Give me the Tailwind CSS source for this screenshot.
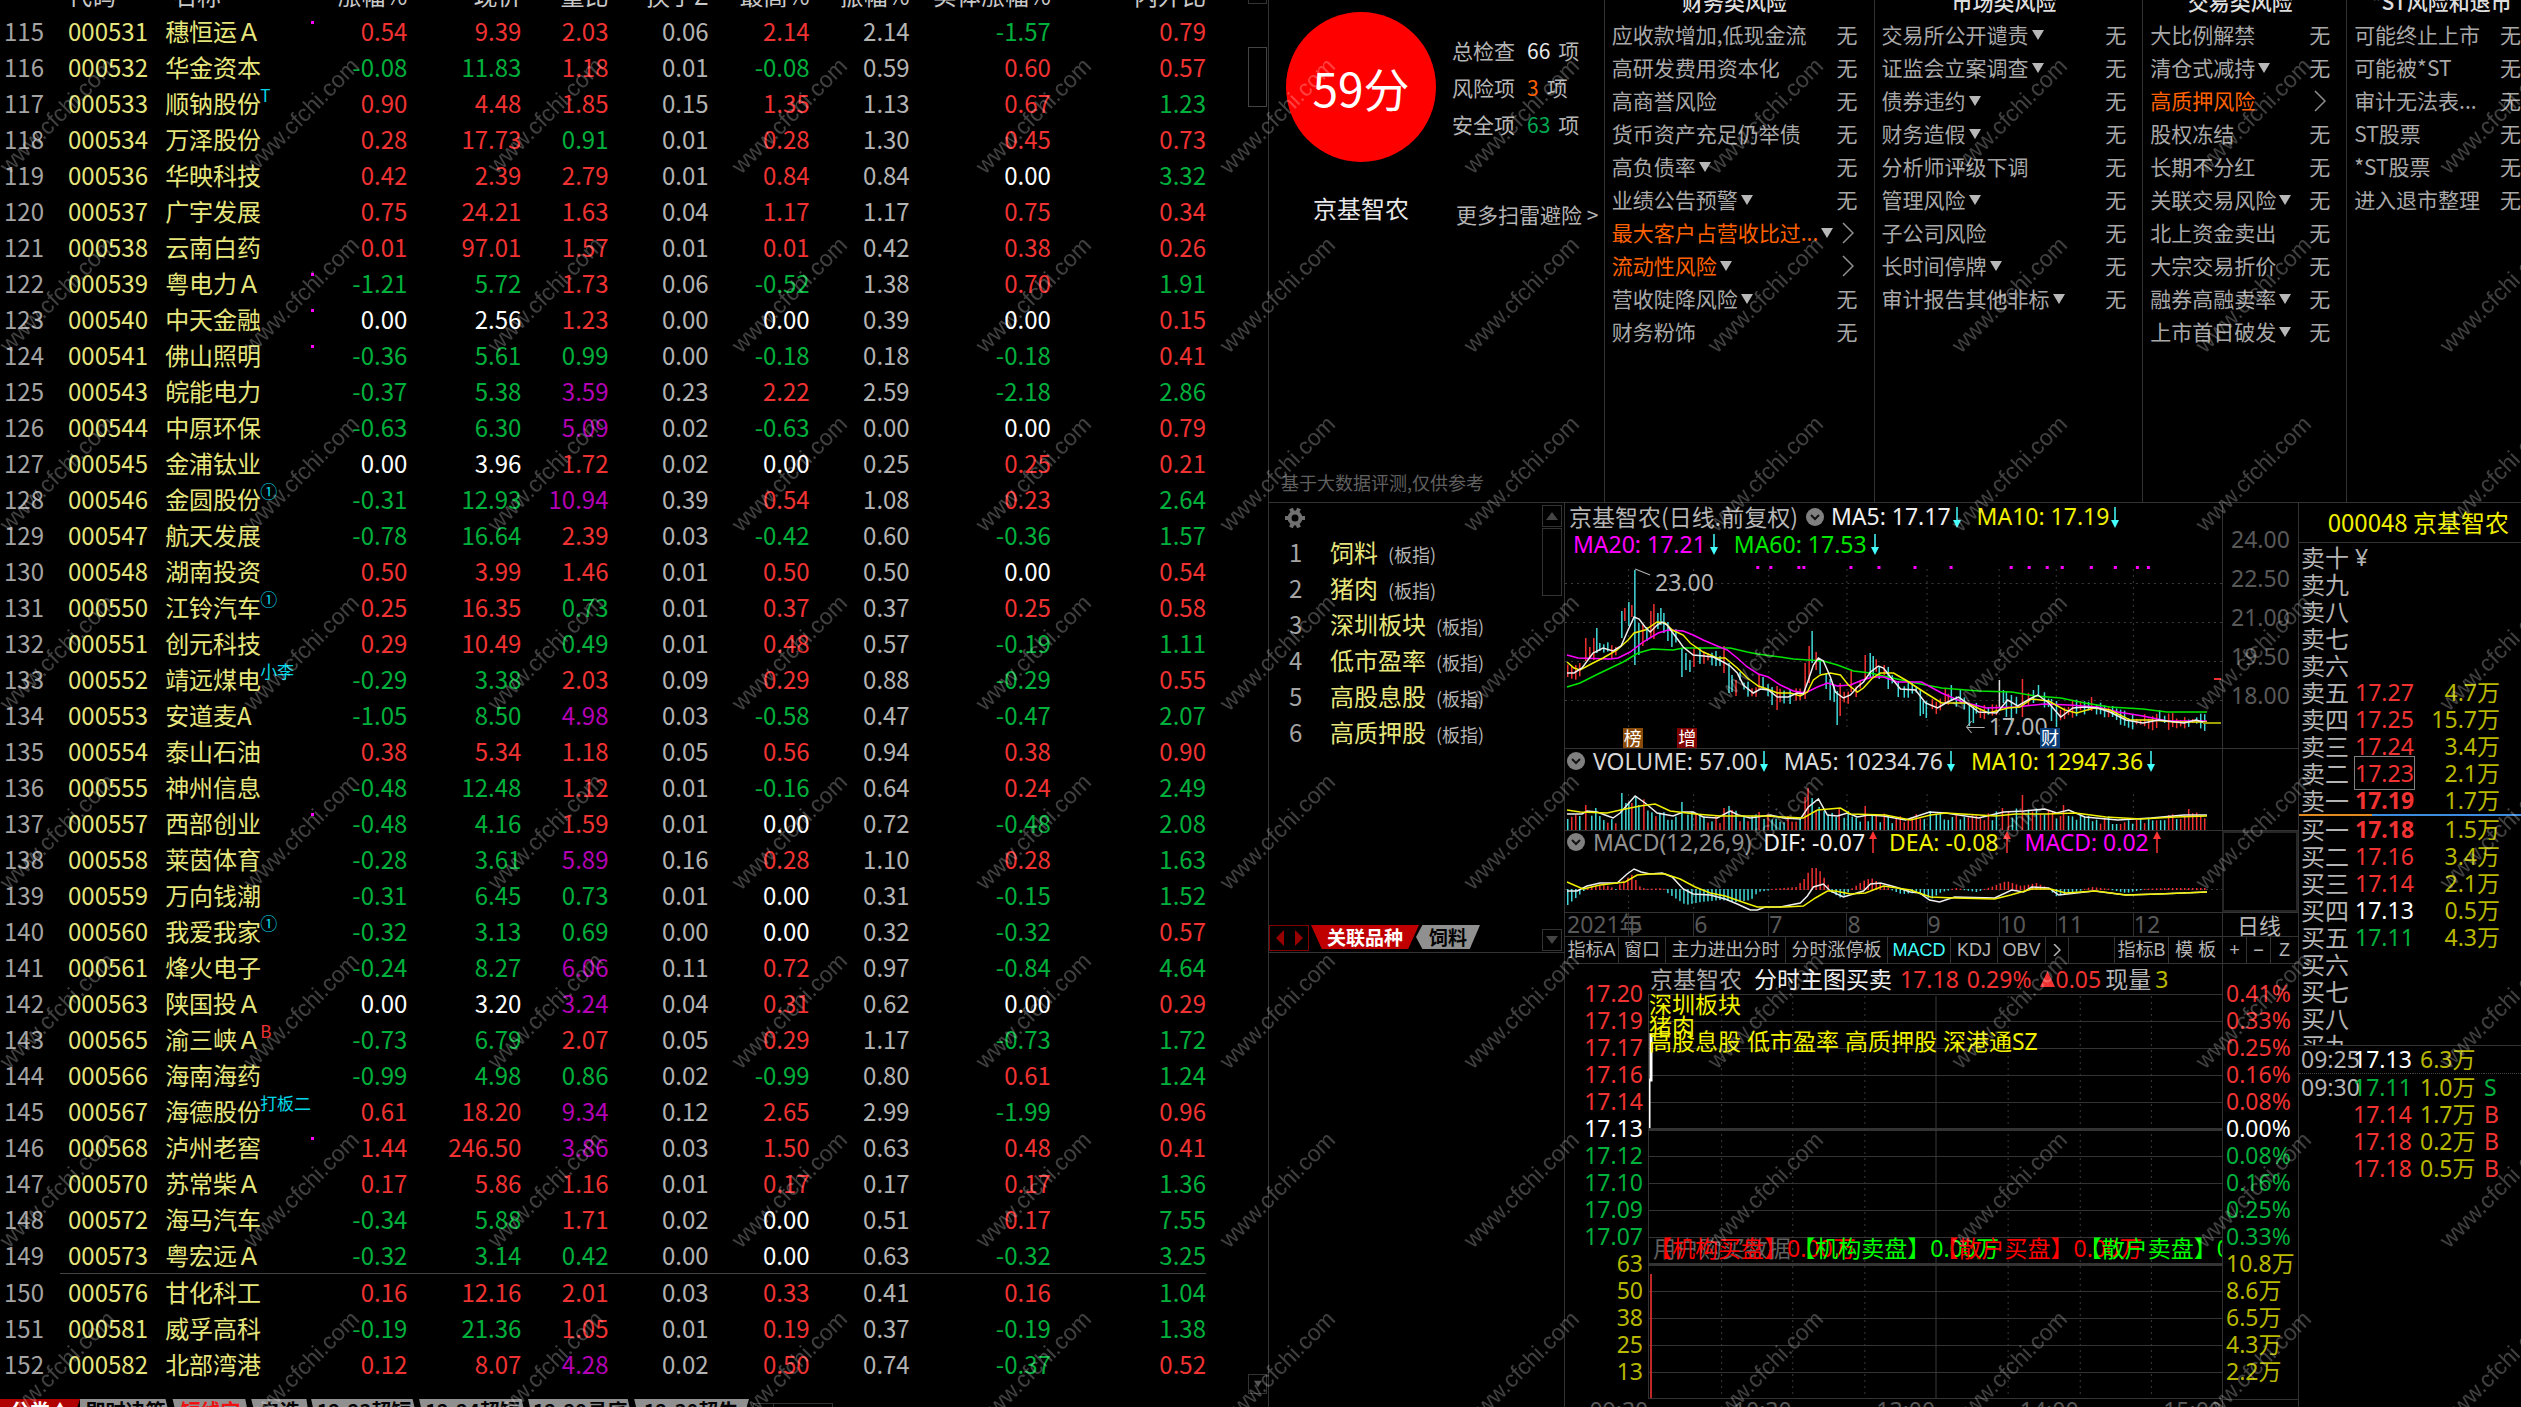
<!DOCTYPE html>
<html lang="zh-CN">
   <head>
      <meta charset="UTF-8" />
      <meta name="viewport" content="width=device-width, initial-scale=1.0" />
      <title>京基智农 000048</title>
      <script src="https://cdn.jsdelivr.net/npm/@tailwindcss/browser@4"></script>
   </head>
   <body
      class="bg-black text-[#b4b4b4] h-screen overflow-hidden relative font-['Noto_Sans_CJK_SC',sans-serif]"
   >
      <!-- shared symbols -->
      <svg class="hidden">
         <symbol id="down" viewBox="0 0 8 22">
            <path d="M4 1V16" stroke="#4ff" stroke-width="1.5" />
            <path d="M0 14H8L4 22Z" fill="#4ff" />
         </symbol>
         <symbol id="up" viewBox="0 0 8 22">
            <path d="M4 6V22" stroke="#f33" stroke-width="1.5" />
            <path d="M0 8H8L4 0Z" fill="#f33" />
         </symbol>
         <symbol id="fold" viewBox="0 0 18 18">
            <circle cx="9" cy="9" r="9" fill="#808080" />
            <path d="M5 7L9 11L13 7" fill="none" stroke="#111" stroke-width="2" />
         </symbol>
         <symbol id="tri" viewBox="0 0 12 10">
            <path d="M0 0H12L6 10Z" fill="#b8b8b8" />
         </symbol>
         <symbol id="more" viewBox="0 0 12 22">
            <path d="M1 1L11 11L1 21" fill="none" stroke="#909090" stroke-width="1.5" />
         </symbol>
      </svg>

      <main class="grid grid-cols-[1268fr_1253fr] h-full">
         <!-- stock list -->
         <section class="flex flex-col min-w-0 overflow-hidden">
            <div class="flex shrink-0">
               <div class="flex-1 pr-[42px] -mt-[23px]">
                  <table class="table-fixed w-full text-2xl leading-9 text-right whitespace-nowrap">
                     <colgroup>
                        <col class="w-[60px]" />
                        <col class="w-[105px]" />
                        <col class="w-[165px]" />
                        <col class="w-[77px]" />
                        <col class="w-[114px]" />
                        <col class="w-[87px]" />
                        <col class="w-[100px]" />
                        <col class="w-[101px]" />
                        <col class="w-[100px]" />
                        <col class="w-[141px]" />
                        <col class="w-[155px]" />
                     </colgroup>
                     <thead>
                        <tr class="h-9 text-[#c8c8c8]">
                           <th></th>
                           <th class="font-normal text-left pl-2">代码</th>
                           <th class="font-normal text-left pl-2">名称</th>
                           <th class="font-normal">涨幅%</th>
                           <th class="font-normal">现价</th>
                           <th class="font-normal">量比</th>
                           <th class="font-normal">换手Z</th>
                           <th class="font-normal">最高%</th>
                           <th class="font-normal">振幅%</th>
                           <th class="font-normal">实体涨幅%</th>
                           <th class="font-normal">内外比</th>
                        </tr>
                     </thead>
                     <tbody id="stocks"></tbody>
                  </table>
               </div>
               <div class="w-5 pr-px flex flex-col">
                  <div class="h-1 border border-t-0 border-[#333]"></div>
                  <div class="mt-[43px] h-[60px] border border-[#444]"></div>
                  <button class="mt-auto mb-[-12px] h-5 border border-[#333] flex items-center justify-center" aria-label="向下">
                     <svg class="w-2 h-2" viewBox="0 0 12 10"><path d="M0 0H12L6 10Z" fill="#555" /></svg>
                  </button>
               </div>
            </div>
            <nav class="mt-[17px] flex h-6 shrink-0 text-xl leading-6 font-bold text-black whitespace-nowrap">
               <button class="w-20 bg-[#b00000] text-white [clip-path:polygon(0_0,100%_0,90%_100%,0_100%)]">分类▲</button>
               <button class="w-[91px] bg-[#909090] [clip-path:polygon(0_0,94%_0,100%_100%,0_100%)]">即时决策</button>
               <button class="w-[79px] bg-[#909090] text-[#f01010] [clip-path:polygon(2%_0,94%_0,100%_100%,9%_100%)]">短线宝</button>
               <button class="w-[60px] bg-[#909090] [clip-path:polygon(2%_0,94%_0,100%_100%,12%_100%)]">自选</button>
               <button class="w-[108px] bg-[#909090] [clip-path:polygon(1%_0,95%_0,100%_100%,6%_100%)]">12-23超短</button>
               <button class="w-[109px] bg-[#909090] [clip-path:polygon(1%_0,95%_0,100%_100%,6%_100%)]">12-24超短</button>
               <button class="w-[106px] bg-[#909090] [clip-path:polygon(1%_0,95%_0,100%_100%,6%_100%)]">12-29寻底</button>
               <button class="w-[116px] bg-[#909090] [clip-path:polygon(1%_0,100%_0,94%_100%,6%_100%)]">12-30超牛</button>
               <span class="ml-1 mt-1 w-20 border border-[#333] flex"><span class="w-5 border-r border-[#333]"></span></span>
            </nav>
         </section>

         <section class="flex flex-col min-w-0 border-l border-[#333] overflow-hidden">
            <!-- risk scan -->
            <div class="h-[503px] shrink-0 border-b border-[#333] grid grid-cols-[335fr_270fr_269fr_204fr_175fr]">
               <div class="flex flex-col min-w-0 whitespace-nowrap">
                  <div class="flex pt-3 pl-[17px]">
                     <div class="w-[150px] flex flex-col items-center">
                        <div class="size-[150px] rounded-full bg-[#f00] text-white text-[46px] leading-[150px] text-center">59分</div>
                        <p class="mt-7 text-2xl leading-9 text-[#e8e8e8]">京基智农</p>
                     </div>
                     <div class="pl-4 pt-5 text-[21px] leading-[37px]">
                        <p>总检查<span class="text-[#e8e8e8] ml-3 mr-2">66</span>项</p>
                        <p>风险项<span class="text-[#ff6000] ml-3 mr-2">3</span>项</p>
                        <p>安全项<span class="text-[#00a850] ml-3 mr-2">63</span>项</p>
                        <a href="#" class="block mt-[53px] ml-1">更多扫雷避险 &gt;</a>
                     </div>
                  </div>
                  <p class="mt-auto pl-3 pb-2 text-lg leading-6 text-[#606060]">基于大数据评测,仅供参考</p>
               </div>
               <div class="border-l border-[#333] pl-[7px] pr-4 min-w-0">
                  <h3 class="text-[21px] leading-[33px] -mt-[15px] text-center text-[#ddd] font-medium">财务类风险</h3>
                  <ul id="risk0"></ul>
               </div>
               <div class="border-l border-[#333] pl-[7px] pr-4 min-w-0">
                  <h3 class="text-[21px] leading-[33px] -mt-[15px] text-center text-[#ddd] font-medium">市场类风险</h3>
                  <ul id="risk1"></ul>
               </div>
               <div class="border-l border-[#333] pl-[7px] pr-4 min-w-0">
                  <h3 class="text-[21px] leading-[33px] -mt-[15px] text-center text-[#ddd] font-medium">交易类风险</h3>
                  <ul id="risk2"></ul>
               </div>
               <div class="border-l border-[#333] pl-[7px] min-w-0">
                  <h3 class="text-[21px] leading-[33px] -mt-[15px] pl-2 text-center text-[#ddd] font-medium whitespace-nowrap">*ST风险和退市</h3>
                  <ul id="risk3"></ul>
               </div>
            </div>

            <div class="grid grid-cols-[295fr_734fr_223fr] flex-1 min-h-0">
               <!-- related boards -->
               <div class="flex flex-col min-w-0">
                  <div class="h-[450px] border-b border-[#333] flex flex-col">
                     <div class="flex flex-1 min-h-0">
                        <div class="flex-1 pt-1">
                           <button class="block ml-[15px]" aria-label="设置">
                              <svg class="size-[22px]" viewBox="0 0 22 22">
                                 <circle cx="11" cy="11" r="5.5" fill="none" stroke="#707070" stroke-width="4" />
                                 <path d="M7 1.5L8.500 5M15 1.500L13.500 5M7 20.500L8.500 17M15 20.500L13.500 17M1 11H4M18 11H21" stroke="#707070" stroke-width="4" />
                              </svg>
                           </button>
                           <table class="mt-[5px] text-2xl leading-9 whitespace-nowrap">
                              <tbody id="boards"></tbody>
                           </table>
                        </div>
                        <div class="w-[22px] pt-[2px] pr-[2px] flex flex-col">
                           <button class="h-[22px] border border-[#333] flex items-center justify-center" aria-label="向上">
                              <svg class="w-3 h-2" viewBox="0 0 12 8"><path d="M0 8H12L6 0Z" fill="#444" /></svg>
                           </button>
                           <div class="h-[68px] border border-[#333] mt-px"></div>
                           <button class="mt-auto h-[22px] border border-[#333] flex items-center justify-center" aria-label="向下">
                              <svg class="w-3 h-2" viewBox="0 0 12 8"><path d="M0 0H12L6 8Z" fill="#444" /></svg>
                           </button>
                        </div>
                     </div>
                     <div class="flex h-[26px] -mt-[26px] mb-[1px] w-[212px] text-[19px] leading-6 font-bold whitespace-nowrap">
                        <div class="w-10 border border-[#800000] flex items-center justify-around">
                           <svg class="w-2 h-4" viewBox="0 0 8 16"><path d="M8 0V16L0 8Z" fill="#900" /></svg>
                           <svg class="w-2 h-4" viewBox="0 0 8 16"><path d="M0 0V16L8 8Z" fill="#900" /></svg>
                        </div>
                        <button class="ml-[2px] w-[108px] h-6 bg-[#c00000] text-white [clip-path:polygon(0_0,100%_0,90%_100%,10%_100%)]">关联品种</button>
                        <button class="-ml-[3px] w-16 h-6 bg-[#909090] text-black [clip-path:polygon(10%_0,100%_0,84%_100%,10%_100%,0_50%)]">饲料</button>
                     </div>
                  </div>
               </div>

               <!-- charts -->
               <div class="border-l border-[#333] flex flex-col min-w-0 font-['Noto_Sans','Noto_Sans_CJK_SC',sans-serif] text-[23px] whitespace-nowrap">
                  <!-- daily k-line -->
                  <div class="grid grid-cols-[1fr_76px] h-[246px] border-b border-[#333] shrink-0">
                     <div class="relative min-w-0">
                        <svg id="kline" class="absolute inset-0 w-full h-full" viewBox="0 0 656 245" preserveAspectRatio="none"></svg>
                        <div class="relative flex items-center h-[27px] pl-1">
                           <span class="font-['Noto_Sans_CJK_SC',sans-serif]">京基智农(日线.前复权)</span>
                           <svg class="size-[18px] ml-2 mr-[7px]"><use href="#fold" /></svg>
                           <span class="text-[#eee]">MA5: 17.17</span>
                           <svg class="w-2 h-[22px] ml-[2px] mr-4"><use href="#down" /></svg>
                           <span class="text-[#f0f000]">MA10: 17.19</span>
                           <svg class="w-2 h-[22px] ml-[2px]"><use href="#down" /></svg>
                        </div>
                        <div class="relative flex items-center h-7 pl-2">
                           <span class="text-[#f0f]">MA20: 17.21</span>
                           <svg class="w-2 h-[22px] ml-1 mr-4"><use href="#down" /></svg>
                           <span class="text-[#00e600]">MA60: 17.53</span>
                           <svg class="w-2 h-[22px] ml-1"><use href="#down" /></svg>
                        </div>
                        <span class="absolute left-[13.7%] top-[65px] leading-7">23.00</span>
                        <span class="absolute left-[64.5%] bottom-2 leading-7">17.00</span>
                        <span class="absolute left-[8.8%] bottom-0 w-5 h-5 bg-[#8a4a08] text-white text-lg leading-5 text-center">榜</span>
                        <span class="absolute left-[17.1%] bottom-0 w-5 h-5 bg-[#800000] text-white text-lg leading-5 text-center">增</span>
                        <span class="absolute left-[72.3%] bottom-0 w-5 h-5 bg-[#0a3c78] text-white text-lg leading-5 text-center">财</span>
                     </div>
                     <div class="border-l border-[#333] pl-2 pt-[17px] text-[#585858] leading-[39px]">
                        <p>24.00</p>
                        <p>22.50</p>
                        <p>21.00</p>
                        <p>19.50</p>
                        <p>18.00</p>
                     </div>
                  </div>
                  <!-- volume -->
                  <div class="grid grid-cols-[1fr_76px] h-[82px] border-b border-[#333] shrink-0">
                     <div class="relative min-w-0">
                        <svg id="volume" class="absolute inset-0 w-full h-full" viewBox="0 0 656 81" preserveAspectRatio="none"></svg>
                        <div class="relative flex items-center h-6 pl-[2px]">
                           <svg class="size-[18px] mr-2"><use href="#fold" /></svg>
                           <span class="text-[#d8d8d8]">VOLUME: 57.00</span>
                           <svg class="w-2 h-[22px] ml-[2px] mr-4"><use href="#down" /></svg>
                           <span class="text-[#d8d8d8]">MA5: 10234.76</span>
                           <svg class="w-2 h-[22px] ml-1 mr-4"><use href="#down" /></svg>
                           <span class="text-[#f0f000]">MA10: 12947.36</span>
                           <svg class="w-2 h-[22px] ml-1"><use href="#down" /></svg>
                        </div>
                     </div>
                     <div class="border-l border-[#333]"></div>
                  </div>
                  <!-- macd -->
                  <div class="grid grid-cols-[1fr_76px] h-[82px] border-b border-[#333] shrink-0">
                     <div class="relative min-w-0">
                        <svg id="macd" class="absolute inset-0 w-full h-full" viewBox="0 0 656 81" preserveAspectRatio="none"></svg>
                        <div class="relative flex items-center h-[22px] pl-[2px]">
                           <svg class="size-[18px] mr-2"><use href="#fold" /></svg>
                           <span class="text-[#909090]">MACD(12,26,9)</span>
                           <span class="text-[#eee] ml-3">DIF: -0.07</span>
                           <svg class="w-2 h-[22px] ml-1 mr-3"><use href="#up" /></svg>
                           <span class="text-[#f0f000]">DEA: -0.08</span>
                           <svg class="w-2 h-[22px] ml-1 mr-[14px]"><use href="#up" /></svg>
                           <span class="text-[#f0f]">MACD: 0.02</span>
                           <svg class="w-2 h-[22px] ml-1"><use href="#up" /></svg>
                        </div>
                     </div>
                     <div class="border-2 border-[#262626]"></div>
                  </div>
                  <!-- months -->
                  <div class="grid grid-cols-[1fr_76px] h-6 border-b border-[#333] shrink-0 text-[#585858] leading-[22px]">
                     <div class="grid grid-cols-[63fr_65fr_75fr_78fr_80fr_72fr_57fr_77fr_89fr]">
                        <span class="pl-[2px] w-0">2021年</span>
                        <span class="border-l border-[#333]">5</span>
                        <span class="border-l border-[#333]">6</span>
                        <span class="border-l border-[#333]">7</span>
                        <span class="border-l border-[#333]">8</span>
                        <span class="border-l border-[#333]">9</span>
                        <span class="border-l border-[#333]">10</span>
                        <span class="border-l border-[#333]">11</span>
                        <span class="border-l border-[#333]">12</span>
                     </div>
                     <div class="border-l border-[#333] pl-[14px] text-[22px] leading-6 text-[#b4b4b4]">日线</div>
                  </div>
                  <!-- indicator tabs -->
                  <div class="flex h-[27px] border-b border-[#333] shrink-0 text-lg leading-[26px] font-['Liberation_Sans','Noto_Sans_CJK_SC',sans-serif]">
                     <button class="w-[54px] border-r border-[#333]">指标A</button>
                     <button class="w-[47px] border-r border-[#333]">窗口</button>
                     <button class="w-[120px] border-r border-[#333]">主力进出分时</button>
                     <button class="w-[102px] border-r border-[#333]">分时涨停板</button>
                     <button class="w-[63px] border-r border-[#333] text-[#4ff]">MACD</button>
                     <button class="w-[47px] border-r border-[#333]">KDJ</button>
                     <button class="w-12 border-r border-[#333]">OBV</button>
                     <button class="w-[23px] border-r border-[#333] flex items-center justify-center" aria-label="更多">
                        <svg class="w-2 h-3" viewBox="0 0 8 12"><path d="M1 0L7 6L1 12" fill="none" stroke="#b4b4b4" stroke-width="1.5" /></svg>
                     </button>
                     <button class="w-[54px] ml-auto border-l border-[#333]">指标B</button>
                     <button class="w-[54px] border-l border-[#333]">模 板</button>
                     <button class="w-6 border-l border-[#333]">+</button>
                     <button class="w-6 border-l border-[#333]">−</button>
                     <button class="w-7 border-l border-[#333]">Z</button>
                  </div>
                  <!-- intraday -->
                  <div class="grid grid-cols-[83px_1fr_76px] shrink-0">
                     <div id="prices" class="pt-4 pr-[5px] text-right leading-[27px]"></div>
                     <div class="min-w-0 flex flex-col">
                        <div class="flex items-center h-[30px] text-[#f03232] relative">
                           <span class="text-[#a8a8a8] ml-[2px]">京基智农</span>
                           <span class="text-[#eee] ml-3 mr-2">分时主图买卖</span>
                           <span>17.18</span>
                           <span class="mx-2">0.29%</span>
                           <svg class="w-[15px] h-4 mr-px" viewBox="0 0 15 16"><path d="M0 16H15L7.500 0Z" fill="#f03232" /></svg>
                           <span>0.05</span>
                           <span class="text-[#b4b4b4] ml-1 mr-1">现量</span>
                           <span class="text-[#b8b800]">3</span>
                        </div>
                        <div class="relative h-[405px] border-b border-l border-[#333]">
                           <svg id="intraday" class="absolute inset-0 w-full h-full" viewBox="0 0 572 404" preserveAspectRatio="none"></svg>
                           <div class="absolute left-0 -top-[2px] text-[#f0f000]">
                              <p class="leading-6">深圳板块</p>
                              <p class="leading-5">猪肉</p>
                              <p class="leading-[10px]">高股息股 低市盈率 高质押股 深港通SZ</p>
                           </div>
                           <p class="absolute left-1 top-60 leading-7 text-[#606060]">用户购买数据</p>
                           <div class="absolute left-0 top-60 w-full grid grid-cols-4 leading-7 text-[#f00] overflow-hidden">
                              <span class="w-0">【机构买盘】0.00万</span>
                              <span class="w-0 text-[#0f0]">【机构卖盘】0.00万</span>
                              <span class="w-0">【散户买盘】0.00万</span>
                              <span class="w-0 text-[#0f0]">【散户卖盘】0.00万</span>
                           </div>
                        </div>
                     </div>
                     <div id="percents" class="border-l border-[#333] pt-4 pl-[3px] leading-[27px]"></div>
                  </div>
                  <div class="flex-1 grid grid-cols-[1fr_76px] min-h-0">
                     <div class="grid grid-cols-[83fr_143fr_143fr_143fr_143fr] text-right text-[#585858] leading-[22px]">
                        <span>09:30</span>
                        <span>10:30</span>
                        <span>13:00</span>
                        <span>14:00</span>
                        <span>15:00</span>
                     </div>
                     <div class="border-l border-t border-[#333]"></div>
                  </div>
               </div>

               <!-- quotes -->
               <div class="border-l border-[#333] min-w-0 text-[23px] leading-[27px] whitespace-nowrap font-['Noto_Sans','Noto_Sans_CJK_SC',sans-serif]">
                  <h2 class="h-10 leading-[38px] border-b border-[#333] text-right pr-3 text-2xl text-[#f0f000] font-['Noto_Sans_CJK_SC',sans-serif]">000048 京基智农</h2>
                  <table class="w-full mt-px table-fixed">
                     <tbody id="sells"></tbody>
                  </table>
                  <div class="flex h-[2px]">
                     <div class="w-[33%] bg-[#e08a20]"></div>
                     <div class="flex-1 bg-[#3c8ce0]"></div>
                  </div>
                  <div class="h-[230px] overflow-hidden border-b border-[#333]">
                     <table class="w-full table-fixed">
                        <tbody id="buys"></tbody>
                     </table>
                  </div>
                  <table class="w-full table-fixed">
                     <tbody id="ticks"></tbody>
                  </table>
               </div>
            </div>
         </section>
      </main>

      <!-- watermark -->
      <svg class="absolute inset-0 w-full h-full pointer-events-none">
         <defs>
            <pattern id="mark" width="244" height="179" patternUnits="userSpaceOnUse" patternTransform="translate(238 1)">
               <text x="15" y="174" transform="rotate(-45 15 174)" class="font-['Liberation_Sans',sans-serif] text-[23px]" fill="#fff" fill-opacity="0.25">www.cfchi.com</text>
            </pattern>
         </defs>
         <rect width="100%" height="100%" fill="url(#mark)" />
      </svg>

      <script>
         const $ = (id) => document.getElementById(id);
         const RED = 'text-[#f03232]', GREEN = 'text-[#00b03c]', WHITE = 'text-white';
         const sign = (v) => (parseFloat(v) > 0 ? RED : parseFloat(v) < 0 ? GREEN : WHITE);

         // code name change price ratio turnover high swing body inout [tag]
         const stocks = `000531 穗恒运Ａ 0.54 9.39 2.03 0.06 2.14 2.14 -1.57 0.79 .
000532 华金资本 -0.08 11.83 1.18 0.01 -0.08 0.59 0.60 0.57
000533 顺钠股份 0.90 4.48 1.85 0.15 1.35 1.13 0.67 1.23 T
000534 万泽股份 0.28 17.73 0.91 0.01 0.28 1.30 0.45 0.73
000536 华映科技 0.42 2.39 2.79 0.01 0.84 0.84 0.00 3.32
000537 广宇发展 0.75 24.21 1.63 0.04 1.17 1.17 0.75 0.34
000538 云南白药 0.01 97.01 1.57 0.01 0.01 0.42 0.38 0.26
000539 粤电力Ａ -1.21 5.72 1.73 0.06 -0.52 1.38 0.70 1.91 .
000540 中天金融 0.00 2.56 1.23 0.00 0.00 0.39 0.00 0.15 .
000541 佛山照明 -0.36 5.61 0.99 0.00 -0.18 0.18 -0.18 0.41 .
000543 皖能电力 -0.37 5.38 3.59 0.23 2.22 2.59 -2.18 2.86
000544 中原环保 -0.63 6.30 5.09 0.02 -0.63 0.00 0.00 0.79
000545 金浦钛业 0.00 3.96 1.72 0.02 0.00 0.25 0.25 0.21
000546 金圆股份 -0.31 12.93 10.94 0.39 0.54 1.08 0.23 2.64 ①
000547 航天发展 -0.78 16.64 2.39 0.03 -0.42 0.60 -0.36 1.57
000548 湖南投资 0.50 3.99 1.46 0.01 0.50 0.50 0.00 0.54
000550 江铃汽车 0.25 16.35 0.73 0.01 0.37 0.37 0.25 0.58 ①
000551 创元科技 0.29 10.49 0.49 0.01 0.48 0.57 -0.19 1.11
000552 靖远煤电 -0.29 3.38 2.03 0.09 0.29 0.88 -0.29 0.55 小李
000553 安道麦A -1.05 8.50 4.98 0.03 -0.58 0.47 -0.47 2.07
000554 泰山石油 0.38 5.34 1.18 0.05 0.56 0.94 0.38 0.90
000555 神州信息 -0.48 12.48 1.12 0.01 -0.16 0.64 0.24 2.49
000557 西部创业 -0.48 4.16 1.59 0.01 0.00 0.72 -0.48 2.08 .
000558 莱茵体育 -0.28 3.61 5.89 0.16 0.28 1.10 0.28 1.63
000559 万向钱潮 -0.31 6.45 0.73 0.01 0.00 0.31 -0.15 1.52
000560 我爱我家 -0.32 3.13 0.69 0.00 0.00 0.32 -0.32 0.57 ①
000561 烽火电子 -0.24 8.27 6.06 0.11 0.72 0.97 -0.84 4.64
000563 陕国投Ａ 0.00 3.20 3.24 0.04 0.31 0.62 0.00 0.29
000565 渝三峡Ａ -0.73 6.79 2.07 0.05 0.29 1.17 -0.73 1.72 B
000566 海南海药 -0.99 4.98 0.86 0.02 -0.99 0.80 0.61 1.24
000567 海德股份 0.61 18.20 9.34 0.12 2.65 2.99 -1.99 0.96 打板二
000568 泸州老窖 1.44 246.50 3.86 0.03 1.50 0.63 0.48 0.41 .
000570 苏常柴Ａ 0.17 5.86 1.16 0.01 0.17 0.17 0.17 1.36
000572 海马汽车 -0.34 5.88 1.71 0.02 0.00 0.51 0.17 7.55
000573 粤宏远Ａ -0.32 3.14 0.42 0.00 0.00 0.63 -0.32 3.25
000576 甘化科工 0.16 12.16 2.01 0.03 0.33 0.41 0.16 1.04
000581 威孚高科 -0.19 21.36 1.05 0.01 0.19 0.37 -0.19 1.38
000582 北部湾港 0.12 8.07 4.28 0.02 0.50 0.74 -0.37 0.52`;

         function tagHtml(tag) {
            if (!tag) return '';
            if (tag === '.') return '<i class="absolute left-[146px] top-2 size-[3px] bg-[#f0f]"></i>';
            const tone = tag === 'B' ? 'text-[#f03232]' : 'text-[#00d8e8]';
            return `<sup class="absolute left-[95px] top-0 text-[17px] leading-5 ${tone}">${tag}</sup>`;
         }

         $('stocks').innerHTML = stocks
            .split('\n')
            .map((line, i) => {
               const [code, name, chg, price, ratio, turn, high, swing, body, io, tag] = line.split(' ');
               const r = parseFloat(ratio);
               const ratioTone = r > 3 ? 'text-[#b400b4]' : r > 1 ? RED : GREEN;
               const edge = i === 35 ? 'border-t border-[#444]' : '';
               return `<tr class="h-9">
                  <td class="text-left pl-1 text-[#a4a4a4]">${115 + i}</td>
                  <td class="text-left pl-2 text-[#e6e67c] ${edge}">${code}</td>
                  <td class="text-left text-[#e6e67c] ${edge}"><div class="relative">${name}${tagHtml(tag)}</div></td>
                  <td class="${sign(chg)} ${edge}">${chg}</td>
                  <td class="${sign(chg)} ${edge}">${price}</td>
                  <td class="${ratioTone} ${edge}">${ratio}</td>
                  <td class="${edge}">${turn}</td>
                  <td class="${sign(high)} ${edge}">${high}</td>
                  <td class="${edge}">${swing}</td>
                  <td class="${sign(body)} ${edge}">${body}</td>
                  <td class="${parseFloat(io) < 1 ? RED : GREEN} ${edge}">${io}</td>
               </tr>`;
            })
            .join('');

         // "+" has a drop-down mark, "!" is a hit
         const risks = [
            '应收款增加,低现金流|高研发费用资本化|高商誉风险|货币资产充足仍举债|高负债率+|业绩公告预警+|!最大客户占营收比过...+|!流动性风险+|营收陡降风险+|财务粉饰',
            '交易所公开谴责+|证监会立案调查+|债券违约+|财务造假+|分析师评级下调|管理风险+|子公司风险|长时间停牌+|审计报告其他非标+',
            '大比例解禁|清仓式减持+|!高质押风险|股权冻结|长期不分红|关联交易风险+|北上资金卖出|大宗交易折价|融券高融卖率+|上市首日破发+',
            '可能终止上市|可能被*ST|审计无法表...|ST股票|*ST股票|进入退市整理',
         ];
         risks.forEach((list, i) => {
            $('risk' + i).innerHTML = list
               .split('|')
               .map((item) => {
                  const hit = item.startsWith('!');
                  const tri = item.endsWith('+') ? '<svg class="w-3 h-[10px] ml-[3px]"><use href="#tri" /></svg>' : '';
                  return `<li class="flex items-center h-[33px] text-[21px] whitespace-nowrap">
                     <span class="${hit ? 'text-[#ff6000]' : 'text-[#a8a8a8]'}">${item.replace(/[!+]/g, '')}</span>${tri}
                     ${hit ? '<svg class="w-3 h-[22px] ml-auto mr-1"><use href="#more" /></svg>' : '<span class="ml-auto text-[#a8a8a8]">无</span>'}
                  </li>`;
               })
               .join('');
         });

         $('boards').innerHTML = ['饲料', '猪肉', '深圳板块', '低市盈率', '高股息股', '高质押股']
            .map((name, i) => `<tr class="h-9">
               <td class="w-[61px] pl-5 text-[#a4a4a4]">${i + 1}</td>
               <td class="text-[#e6e67c]">${name}<span class="ml-[10px] text-lg text-[#b4b4b4]">(板指)</span></td>
            </tr>`)
            .join('');

         const book = (side, rows) => rows
            .map(([lv, price, vol, tone]) => `<tr class="h-[27px]">
               <td class="w-[54px] pl-[2px] text-2xl leading-[27px]">${side}${lv}</td>
               <td class="w-[66px] pl-[2px] ${tone || ''}">${price || ''}</td>
               <td class="text-right pr-[21px] text-[#b8b800]">${vol || ''}</td>
            </tr>`)
            .join('');
         $('sells').innerHTML = book('卖', [
            ['十', '¥'], ['九'], ['八'], ['七'], ['六'],
            ['五', '17.27', '4.7万', RED],
            ['四', '17.25', '15.7万', RED],
            ['三', '17.24', '3.4万', RED],
            ['二', '<span class="outline outline-[#808080]">17.23</span>', '2.1万', RED],
            ['一', '<b>17.19</b>', '1.7万', RED],
         ]);
         $('buys').innerHTML = book('买', [
            ['一', '<b>17.18</b>', '1.5万', RED],
            ['二', '17.16', '3.4万', RED],
            ['三', '17.14', '2.1万', RED],
            ['四', '17.13', '0.5万', WHITE],
            ['五', '17.11', '4.3万', GREEN],
            ['六'], ['七'], ['八'], ['九'],
         ]);
         $('ticks').innerHTML = [
            ['09:25', '17.13', '6.3万', '', WHITE],
            ['09:30', '17.11', '1.0万', 'S', GREEN],
            ['', '17.14', '1.7万', 'B', RED],
            ['', '17.18', '0.2万', 'B', RED],
            ['', '17.18', '0.5万', 'B', RED],
         ]
            .map(([time, price, vol, side, tone], i) => `<tr class="h-[27px] ${i ? '' : 'border-b border-dotted border-[#444]'}">
               <td class="w-[54px] pl-[2px]">${time}</td>
               <td class="w-[60px] ${tone}">${price}</td>
               <td class="w-[71px] pl-[7px] text-[#b8b800]">${vol}</td>
               <td class="${tone}">${side}</td>
            </tr>`)
            .join('');

         const level = (i) => (i < 5 ? RED : i === 5 ? WHITE : i < 10 ? GREEN : 'text-[#b8b800]');
         const fill = (id, text) => {
            $(id).innerHTML = text.split(' ').map((t, i) => `<p class="${level(i)}">${t}</p>`).join('');
         };
         fill('prices', '17.20 17.19 17.17 17.16 17.14 17.13 17.12 17.10 17.09 17.07 63 50 38 25 13');
         fill('percents', '0.41% 0.33% 0.25% 0.16% 0.08% 0.00% 0.08% 0.16% 0.25% 0.33% 10.8万 8.6万 6.5万 4.3万 2.2万');

         // ---- charts ----
         const months = [63, 128, 203, 281, 361, 433, 490, 567];
         const ma5 = '2,170 9,170 17,165 28,150 38,145 48,148 56,143 63,127 69,114 74,116 80,124 85,129 92,122 97,119 102,122 107,129 113,137 118,144 128,152 139,153 148,154 158,159 165,163 172,170 178,182 188,190 195,186 203,187 212,194 223,194 232,190 238,191 243,177 248,162 253,155 258,158 265,174 270,189 278,195 285,192 292,184 298,179 305,169 313,163 318,165 325,174 335,186 350,187 360,200 372,205 382,199 393,194 401,200 413,209 431,210 442,197 452,203 464,196 472,192 483,200 495,214 507,205 519,204 532,205 544,209 560,217 577,220 593,217 618,220 630,217 641,220';
         const ma10 = '2,159 9,165 15,167 28,160 38,155 52,147 63,137 69,130 80,127 92,119 100,120 107,127 118,132 125,140 138,149 152,155 160,155 172,165 182,175 193,183 202,186 212,190 225,190 235,193 242,189 248,177 255,172 265,170 275,172 283,182 292,189 298,185 307,175 315,170 328,170 340,177 360,190 376,200 401,200 423,210 442,205 454,204 466,196 483,198 499,207 511,210 528,205 544,207 564,217 585,217 609,219 641,219';
         const ma20 = '2,152 13,155 45,156 53,155 65,149 78,139 93,130 103,127 118,128 128,132 138,137 152,143 162,147 172,155 182,164 193,171 203,174 215,182 228,188 240,190 252,184 262,180 272,183 285,182 297,177 307,174 318,174 332,179 356,179 376,190 397,199 421,205 450,204 479,201 503,202 532,204 552,209 577,213 601,218 641,218';
         const ma60 = '2,184 15,180 35,170 58,159 73,150 87,146 108,147 118,145 165,145 182,149 192,151 215,154 228,156 258,158 272,162 288,168 305,170 318,173 345,179 376,185 413,188 446,189 470,193 495,195 519,200 544,204 577,206 601,209 641,209';
         const vol5 = '2,65 17,65 22,62 32,63 40,66 48,69 55,64 70,47 80,54 92,64 108,67 118,63 128,63 138,68 152,69 165,62 173,66 185,69 205,66 218,69 235,70 243,58 253,50 262,66 272,67 282,64 292,68 303,66 318,67 340,71 364,63 380,64 413,69 438,63 458,62 479,60 491,64 503,61 519,68 552,71 585,69 618,66 641,66';
         const vol10 = '2,61 15,63 42,64 60,60 75,57 90,55 105,62 130,65 155,67 200,67 238,69 252,61 275,59 285,65 320,66 345,71 365,66 380,64 430,67 450,65 480,65 510,64 540,68 575,70 610,68 641,67';
         const dif = '2,60 12,60 22,55 35,52 52,52 62,43 69,38 76,41 85,43 97,42 107,46 118,58 128,63 145,64 160,68 172,73 185,79 192,79 200,76 215,76 235,72 242,65 248,56 258,53 265,60 278,66 298,60 305,53 315,52 330,56 345,61 354,62 364,69 374,71 389,66 429,67 446,59 458,61 466,56 483,57 493,64 528,60 560,64 593,63 641,61';
         const dea = '2,51 18,58 35,54 60,51 72,44 85,43 100,43 115,48 130,56 145,62 160,65 180,72 192,76 220,76 238,75 250,67 262,60 270,60 285,63 300,62 318,55 345,59 365,66 389,67 429,68 445,64 466,58 485,58 500,62 530,60 560,64 593,63 641,61';
         const hist = '2,-15 18,-1 25,3 40,4 50,0 55,6 67,15 73,3 80,0 97,1 103,-4 120,-15 135,-12 155,-10 170,-12 185,-10 192,-2 205,0 230,2 238,10 245,21 252,21 260,8 266,-3 275,-8 285,0 297,8 305,11 320,2 335,-4 350,-3 365,-9 375,-2 390,1 410,-2 425,2 440,8 455,3 470,6 482,1 490,-6 505,-3 525,2 545,0 560,-3 575,0 600,1 641,1';

         const R = '#f03030', C = '#40d8d8';
         const line = (x1, y1, x2, y2, color, w = 1, dash = '') =>
            `<line x1="${x1}" y1="${y1}" x2="${x2}" y2="${y2}" stroke="${color}" stroke-width="${w}" stroke-dasharray="${dash}" />`;
         const poly = (pts, color) => `<polyline points="${pts}" fill="none" stroke="${color}" stroke-width="1.5" />`;
         const bar = (x, y1, y2, color) => `<rect x="${x}" y="${y1}" width="1.500" height="${y2 - y1}" fill="${color}" />`;
         const parse = (s) => s.split(' ').map((p) => p.split(',').map(Number));
         function at(pts, x) {
            const i = Math.max(1, pts.findIndex((p) => p[0] >= x));
            const [a, b] = [pts[i - 1], pts[i]];
            return a[1] + ((b[1] - a[1]) * (x - a[0])) / (b[0] - a[0]);
         }
         let seed = 7;
         const rnd = () => (seed = (seed * 16807) % 2147483647) / 2147483647;

         // tall candles: x, top, bottom, color
         const spikes = [
            [20, 135, 158, R], [24, 144, 155, R], [28, 135, 157, R], [31, 125, 150, C], [34, 140, 148, C], [56, 108, 135, C], [59, 105, 118, R], [63, 99, 123, C], [66, 102, 114, R],
            [69, 67, 162, C], [73, 120, 152, C], [77, 122, 143, R], [81, 124, 138, C], [85, 108, 134, R], [88, 101, 136, R], [92, 110, 126, C], [95, 105, 122, C], [98, 110, 130, C], [102, 119, 138, C], [106, 128, 144, C],
            [116, 145, 174, C], [120, 150, 167, C], [124, 157, 169, C], [128, 145, 164, R], [158, 143, 170, R], [163, 160, 190, C], [166, 172, 189, C], [170, 177, 193, R], [193, 171, 186, R], [197, 174, 187, C], [206, 184, 202, C], [211, 183, 207, R],
            [224, 186, 201, C], [239, 160, 196, R], [243, 143, 180, R], [246, 128, 160, C], [250, 149, 167, R], [254, 158, 171, C], [260, 170, 186, C], [264, 176, 197, C], [268, 182, 199, C], [271, 188, 222, C], [274, 180, 213, R], [285, 168, 189, R], [299, 152, 177, R], [304, 150, 175, C], [307, 153, 173, C],
            [313, 164, 176, C], [318, 162, 172, R], [322, 164, 186, C], [332, 178, 194, C], [354, 187, 213, C], [357, 198, 211, C], [360, 198, 215, C], [379, 185, 200, R], [385, 182, 197, C], [403, 200, 223, C], [407, 204, 220, C], [433, 177, 204, '#ddd'], [437, 187, 200, C], [440, 188, 214, C],
            [445, 192, 222, C], [456, 176, 214, R], [467, 187, 200, C], [472, 182, 194, C], [485, 196, 218, C], [490, 198, 224, C], [525, 194, 208, R], [593, 207, 218, C],
         ];
         const pts5 = parse(ma5);
         let k = '';
         for (const y of [80, 119, 158, 197]) k += line(0, y + 0.5, 656, y + 0.5, '#3a3a3a', 1, '2 4');
         for (const x of months) k += line(x + 0.5, 66, x + 0.5, 225, '#3a3a3a', 1, '2 4');
         for (let x = 2; x < 641; x += 4) {
            if (spikes.some((s) => Math.abs(s[0] - x) < 3)) continue;
            const y = at(pts5, x);
            const slope = at(pts5, Math.min(x + 6, 640)) - y;
            const color = slope + (rnd() - 0.5) * 6 > 0 ? C : R;
            k += bar(x, y - 2 - rnd() * 7, y + 2 + rnd() * 7, color);
         }
         for (const s of spikes) k += bar(...s);
         k += poly(ma60, '#00e600') + poly(ma20, '#f0f') + poly(ma10, '#f0f000') + poly(ma5, '#eee');
         for (const x of [192, 205, 233, 238, 285, 313, 349, 385, 445, 463, 481, 496, 525, 549, 571, 582])
            k += `<rect x="${x - 1}" y="63" width="3" height="3" fill="#f0f" />`;
         k += line(70, 66, 85, 72, '#b4b4b4') + line(401, 224.5, 419, 224.5, '#b4b4b4') + line(401, 224, 406, 218, '#b4b4b4') + line(401, 224, 406, 230, '#b4b4b4');
         k += line(648, 176, 655, 176, '#f03030', 2) + line(637, 220, 655, 220, '#a0a000', 2);
         $('kline').innerHTML = k;

         const peaks = { 20: [25, R], 30: [22, C], 56: [37, C], 60: [27, C], 63: [28, C], 66: [27, R], 70: [34, C], 73: [25, C], 116: [28, C], 158: [22, R], 163: [24, C], 193: [18, R], 239: [33, R], 242: [42, R], 246: [32, C], 250: [20, R], 253: [23, C], 273: [22, R], 299: [24, R], 436: [22, R], 456: [35, R], 497: [25, R], 364: [19, C], 622: [21, R] };
         let v = '';
         for (const x of months) v += line(x + 0.5, 45, x + 0.5, 80, '#3a3a3a', 1, '2 4');
         const ptsV = parse(vol5);
         for (let x = 2; x < 641; x += 4) {
            if (Object.keys(peaks).some((p) => Math.abs(p - x) < 3)) continue;
            v += bar(x, Math.min(75, at(ptsV, x) + rnd() * 10 - 3), 81, rnd() > 0.5 ? C : R);
         }
         for (const [x, [h, color]] of Object.entries(peaks)) v += bar(+x, 81 - h, 81, color);
         $('volume').innerHTML = v + poly(vol5, '#eee') + poly(vol10, '#f0f000');

         let m = line(0, 58.5, 656, 58.5, '#3a3a3a', 1, '2 3');
         for (const x of months) m += line(x + 0.5, 40, x + 0.5, 80, '#3a3a3a', 1, '2 4');
         const ptsH = parse(hist);
         for (let x = 2; x < 641; x += 4) {
            const h = at(ptsH, x);
            m += h > 0 ? bar(x, 58 - h, 59, R) : bar(x, 58, 59 - h, C);
         }
         $('macd').innerHTML = m + poly(dif, '#eee') + poly(dea, '#f0f000');

         let d = '';
         for (let i = 0; i < 15; i++) {
            const thick = i === 5 || i === 10;
            d += line(0, i * 27 + 0.5, 572, i * 27 + 0.5, '#333', thick ? 3 : 1);
         }
         for (let i = 1; i < 8; i++) {
            const x = Math.round(i * 71.6) + 0.5;
            d += line(x, 2, x, 404, '#3a3a3a', 1, i === 4 ? '' : '2 4');
         }
         d += '<path d="M0 134V86H2V39" fill="none" stroke="#fff" stroke-width="3" />' + line(2, 280, 2, 404, '#c02828', 2);
         $('intraday').innerHTML = d;
      </script>
   </body>
</html>
